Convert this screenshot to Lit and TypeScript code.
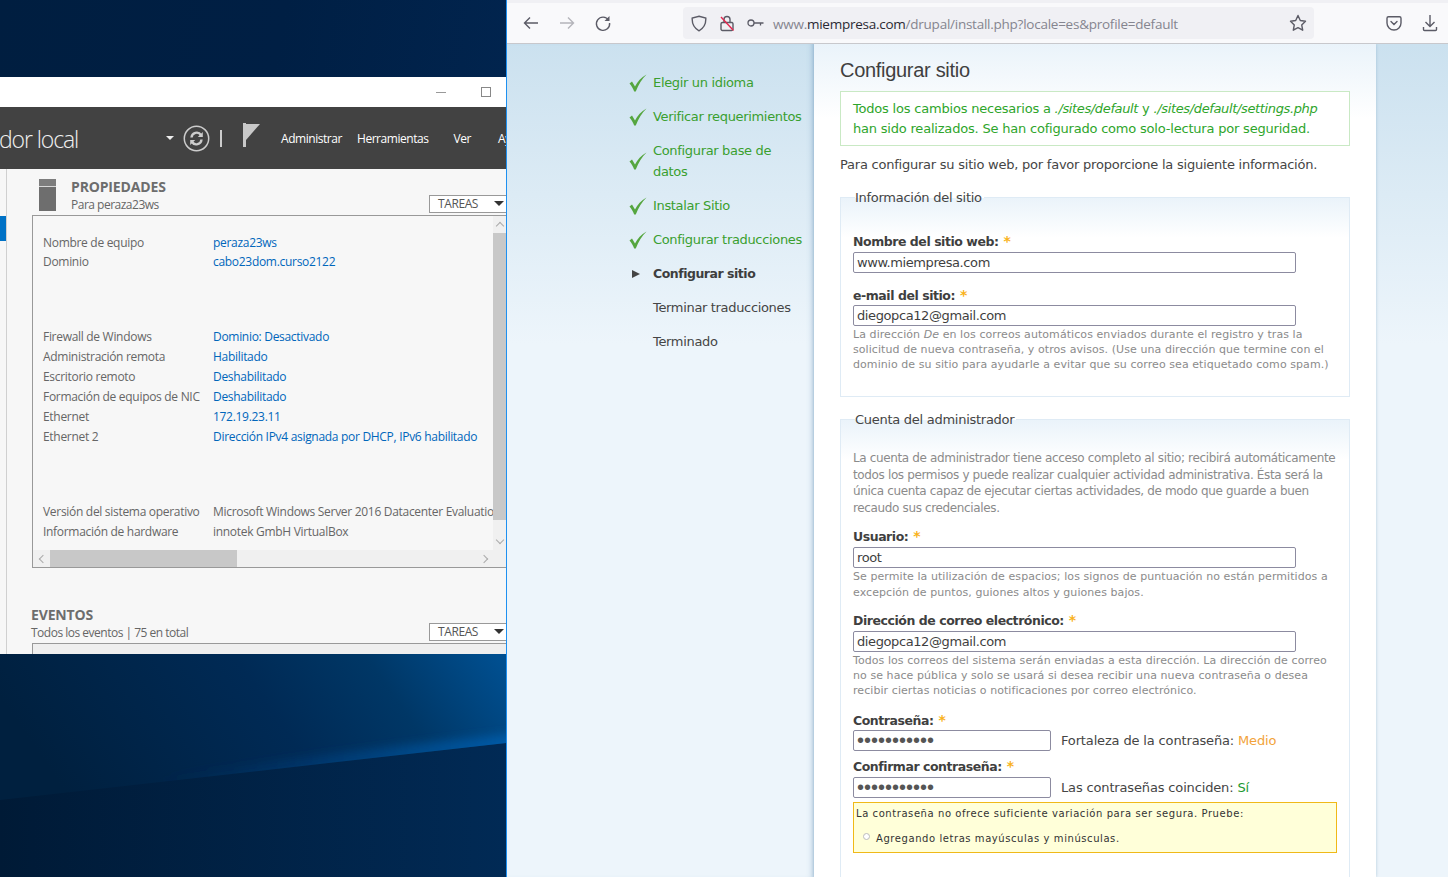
import { LitElement, html, css, svg } from 'lit';
import { customElement } from 'lit/decorators.js';

const backIcon = svg`<path d="M16 9H2.5M8 3.5 2.5 9 8 14.5" fill="none" stroke="currentColor" stroke-width="1.4"/>`;
const reloadIcon = svg`<path d="M14.6 6.2A6.6 6.6 0 1 0 15.6 9" fill="none" stroke="currentColor" stroke-width="1.4"/><path d="M15.5 2v5h-5z" fill="currentColor"/>`;

const steps = [
  { label: 'Elegir un idioma', state: 'done' },
  { label: 'Verificar requerimientos', state: 'done' },
  { label: 'Configurar base de datos', state: 'done' },
  { label: 'Instalar Sitio', state: 'done' },
  { label: 'Configurar traducciones', state: 'done' },
  { label: 'Configurar sitio', state: 'active' },
  { label: 'Terminar traducciones', state: 'todo' },
  { label: 'Terminado', state: 'todo' },
];

const propGroups = [
  [
    ['Nombre de equipo', 'peraza23ws', true],
    ['Dominio', 'cabo23dom.curso2122', true],
  ],
  [
    ['Firewall de Windows', 'Dominio: Desactivado', true],
    ['Administración remota', 'Habilitado', true],
    ['Escritorio remoto', 'Deshabilitado', true],
    ['Formación de equipos de NIC', 'Deshabilitado', true],
    ['Ethernet', '172.19.23.11', true],
    ['Ethernet 2', 'Dirección IPv4 asignada por DHCP, IPv6 habilitado', true],
  ],
  [
    ['Versión del sistema operativo', 'Microsoft Windows Server 2016 Datacenter Evaluation', false],
    ['Información de hardware', 'innotek GmbH VirtualBox', false],
  ],
];

@customElement('server-window')
class ServerWindow extends LitElement {
  static styles = css`
    :host {
      display: block;
      height: 577px;
      background: #f7f7f7;
      font-family: 'Open Sans', 'Liberation Sans', sans-serif;
      color: #666;
      overflow: hidden;
    }
    .titlebar {
      height: 30px;
      background: #fff;
      display: flex;
      justify-content: flex-end;
      align-items: center;
      gap: 35px;
      padding-right: 15px;
    }
    .min { width: 10px; height: 1px; background: #999; }
    .max { width: 8px; height: 8px; border: 1px solid #888; }
    .header {
      height: 62px;
      background: #424242;
      display: flex;
      align-items: center;
      color: #fff;
      white-space: nowrap;
      overflow: hidden;
    }
    .header > * { flex: none; }
    .app-title {
      font-size: 23px;
      font-weight: 300;
      margin-left: -1px;
      width: 167px;
      color: #f0f0f0;
      letter-spacing: -1.1px;
      padding-top: 2px;
    }
    .caret {
      width: 0;
      height: 0;
      border: 4px solid transparent;
      border-top-color: #eee;
      border-bottom: 0;
      margin-right: 9px;
    }
    .refresh { display: block; margin-right: 10px; }
    .sep { width: 2px; height: 17px; background: #ccc; margin-right: 21px; }
    .flag { display: block; margin-right: 20px; margin-top: -6px; }
    .menu { font-size: 12px; letter-spacing: -0.45px; color: #fff; margin-right: 15px; }
    .menu.ver { margin: 0 27px 0 10px; }
    .body { display: flex; height: 485px; }
    .rail {
      width: 6px;
      flex: none;
      border-right: 1px solid #d0d0d0;
      padding-top: 47px;
      box-sizing: content-box;
    }
    .rail i { display: block; height: 25px; background: #0072c6; }
    .main { flex: 1; min-width: 0; padding-left: 25px; }
    .section-head {
      display: flex;
      align-items: flex-end;
    }
    .server-icon {
      width: 17px;
      height: 32px;
      flex: none;
      margin: 0 15px 2px 7px;
      background: #6e6e6e;
    }
    .server-icon b { display: block; height: 7px; background: #7d7d7d; border-bottom: 1px solid #d8d8d8; }
    .head-text { flex: 1; }
    h3 { margin: 0; font-size: 14px; font-weight: 700; color: #6d6d6d; line-height: 18px; letter-spacing: -0.15px; }
    .sub { font-size: 12px; line-height: 17px; letter-spacing: -0.5px; }
    .tasks {
      width: 68px;
      height: 16px;
      border: 1px solid #999;
      border-right: 0;
      background: #fff;
      font-size: 12px;
      line-height: 16px;
      padding-left: 8px;
      position: relative;
      color: #555;
      letter-spacing: -0.4px;
    }
    .tasks::after {
      content: '';
      position: absolute;
      right: 2px;
      top: 5px;
      border: 5px solid transparent;
      border-top-color: #333;
      border-bottom: 0;
    }
    .props-head { padding-top: 11px; height: 33px; padding-bottom: 2px; }
    .box {
      height: 351px;
      border: 1px solid #999;
      border-right: 0;
      display: grid;
      grid-template-columns: 1fr 13px;
      grid-template-rows: 1fr 17px;
    }
    .rows { padding: 17px 0 0 10px; overflow: hidden; white-space: nowrap; font-size: 12px; letter-spacing: -0.3px; }
    .group { height: 94px; }
    .group:first-child .row { height: 19px; }
    .group:nth-child(2) { height: 175px; }
    .row { display: flex; height: 20px; line-height: 19px; }
    .row span:first-child { width: 170px; flex: none; }
    .row .link { color: #0066bb; }
    .vbar { background: #f0f0f0; position: relative; }
    .vbar i { display: block; width: 13px; height: 287px; background: #c8c8c8; margin-top: 17px; }
    .hbar { grid-column: 1 / 3; background: #f0f0f0; display: flex; position: relative; }
    .hbar i { display: block; width: 187px; margin-left: 17px; background: #c8c8c8; }
    .chev { width: 5px; height: 5px; border: solid #aaa; border-width: 1px 0 0 1px; position: absolute; }
    .chev.l { left: 7px; top: 6px; transform: rotate(-45deg); }
    .chev.r { right: 19px; top: 6px; transform: rotate(135deg); }
    .chev.u { top: 7px; left: 4px; transform: rotate(45deg); }
    .chev.d { bottom: 7px; left: 4px; transform: rotate(225deg); }
    .events { margin-top: 38px; margin-left: -1px; }
    .events-box { height: 40px; border: 1px solid #999; border-right: 0; border-bottom: 0; background: #efefef; margin-top: 2px; margin-left: 1px; }
  `;

  render() {
    return html`
      <div class="titlebar"><span class="min"></span><span class="max"></span></div>
      <div class="header">
        <span class="app-title">dor local</span>
        <span class="caret"></span>
        <svg class="refresh" width="27" height="27" viewBox="0 0 27 27" fill="none" stroke="#ccc">
          <circle cx="13.5" cy="13.5" r="12.2" stroke-width="1.5"/>
          <path d="M8.500 12.500a5.200 5.200 0 0 1 9.500-2.500M18.500 14.500a5.200 5.200 0 0 1-9.500 2.500" stroke-width="2.4"/>
          <path d="M19.800 7v5h-5zM7.200 20v-5h5z" fill="#ccc" stroke="none"/>
        </svg>
        <span class="sep"></span>
        <svg class="flag" width="18" height="24" viewBox="0 0 18 24">
          <rect x="0" y="0" width="3" height="24" fill="#c8c8c8"/>
          <path d="M3 1h14L3 17z" fill="#c8c8c8"/>
        </svg>
        <span class="menu">Administrar</span>
        <span class="menu">Herramientas</span>
        <span class="menu ver">Ver</span>
        <span class="menu">Ayuda</span>
      </div>
      <div class="body">
        <div class="rail"><i></i></div>
        <div class="main">
          <div class="section-head props-head">
            <span class="server-icon"><b></b></span>
            <div class="head-text">
              <h3>PROPIEDADES</h3>
              <div class="sub">Para peraza23ws</div>
            </div>
            <div class="tasks">TAREAS</div>
          </div>
          <div class="box">
            <div class="rows">
              ${propGroups.map(g => html`
                <div class="group">
                  ${g.map(r => html`<div class="row"><span>${r[0]}</span><span class=${r[2] ? 'link' : ''}>${r[1]}</span></div>`)}
                </div>
              `)}
            </div>
            <div class="vbar"><i></i><span class="chev u"></span><span class="chev d"></span></div>
            <div class="hbar"><i></i><span class="chev l"></span><span class="chev r"></span></div>
          </div>
          <div class="events">
            <div class="section-head">
              <div class="head-text">
                <h3>EVENTOS</h3>
                <div class="sub">Todos los eventos | 75 en total</div>
              </div>
              <div class="tasks">TAREAS</div>
            </div>
            <div class="events-box"></div>
          </div>
        </div>
      </div>
    `;
  }
}

@customElement('install-page')
class InstallPage extends LitElement {
  static styles = css`
    :host {
      display: flex;
      flex: 1;
      min-height: 0;
      background: linear-gradient(#cbe1ef 0, #edf5fb 300px);
      font-family: 'DejaVu Sans', Verdana, sans-serif;
      font-size: 13px;
      color: #454545;
      overflow: hidden;
    }
    .sidebar {
      width: 307px;
      flex: none;
      padding: 28px 0 0 122px;
      box-sizing: border-box;
      box-shadow: inset -6px 0 6px -5px rgba(90,140,180,0.45);
    }
    ol { list-style: none; margin: 0; padding: 0; }
    .sidebar li {
      display: flex;
      align-items: center;
      margin-bottom: 13px;
      line-height: 21px;
      letter-spacing: -0.33px;
    }
    .mark { width: 24px; flex: none; display: flex; align-items: center; }
    .text { flex: 1; padding-right: 7px; }
    li.done { color: #3a9f2f; }
    li.active { font-weight: 700; font-size: 12.5px; letter-spacing: -0.48px; color: #3e3e3e; }
    li.todo { color: #454545; }
    .tri { width: 0; height: 0; border: 4px solid transparent; border-left: 8px solid #444; border-right: 0; margin-left: 3px; }

    .content {
      width: 562px;
      flex: none;
      box-sizing: border-box;
      padding: 14px 26px 0;
      background: linear-gradient(#eaf3fa 0, #fff 75px);
      box-shadow: 0 0 3px rgba(120,160,190,0.5);
    }
    h1 {
      margin: 0;
      font-family: 'Liberation Sans', Arial, sans-serif;
      font-size: 20px;
      font-weight: 400;
      line-height: 25px;
      color: #3f3f3f;
      letter-spacing: -0.3px;
    }
    .status {
      margin-top: 8px;
      padding: 7px 12px;
      height: 55px;
      box-sizing: border-box;
      border: 1px solid #c9e9c4;
      background: #fff;
      color: #2ea52b;
      line-height: 20px;
      letter-spacing: -0.2px;
      white-space: nowrap;
    }
    .status i { letter-spacing: -0.36px; }
    .intro { margin: 9px 0 0; line-height: 19px; letter-spacing: -0.23px; }
    fieldset {
      margin: 0;
      padding: 0 12px;
      border: 1px solid #dfebf5;
      background: linear-gradient(#eaf3fa 0, #fff 40px);
      min-width: 0;
    }
    .site { margin-top: 13px; height: 210px; box-sizing: border-box; }
    .admin { margin-top: 12px; height: 600px; box-sizing: border-box; }
    legend { padding: 2px 2px 0 0; margin-left: 2px; line-height: 18px; letter-spacing: -0.27px; }
    label { display: block; font-size: 12.5px; font-weight: 700; line-height: 16px; color: #3f3f3f; letter-spacing: -0.45px; }
    label em { font-style: normal; font-size: 14px; color: #f9b21a; font-weight: 700; margin-left: 1px; }
    input {
      display: block;
      box-sizing: border-box;
      width: 443px;
      height: 21px;
      padding: 0 3px;
      margin: 2px 0 0;
      border: 1px solid #8c8ba0;
      border-radius: 2px;
      background: #fff;
      font: 13px 'DejaVu Sans', Verdana, sans-serif;
      letter-spacing: -0.4px;
      color: #3f3f3f;
      outline: none;
    }
    input.tight { margin-top: 1px; }
    input.short { width: 198px; margin: 0; flex: none; font: 20px 'Liberation Sans', Arial, sans-serif; letter-spacing: 0; color: #555; }
    .pw { display: flex; align-items: center; gap: 10px; letter-spacing: -0.15px; margin-top: 2px; }
    .pw.tight { margin-top: 1px; }
    .desc { font-size: 11px; line-height: 15.2px; color: #8b8b8b; margin-top: 1px; letter-spacing: 0.07px; }
    .lead { font-size: 12px; line-height: 16.6px; color: #8b8b8b; letter-spacing: -0.36px; margin: 21px -6px 0 0; }
    .f1 { margin-top: 26px; }
    .f2 { margin-top: 14px; }
    .f3 { margin-top: 12px; }
    .f4 { margin-top: 12px; }
    .f6 { margin-top: 14px; }
    .f7 { margin-top: 7px; }
    .medio { color: #f2a33a; }
    .si { color: #1c9a30; }
    .hint {
      width: 484px;
      height: 51px;
      box-sizing: border-box;
      margin-top: 4px;
      border: 1px solid #f0b918;
      background: #ffffd9;
      color: #333;
      font-size: 10px;
      padding: 3px 2px;
      line-height: 15px;
      letter-spacing: 0.57px;
    }
    .hint ul { margin: 10px 0 0; padding: 0; list-style: none; }
    .hint li { display: flex; align-items: center; margin: 0 0 0 7px; }
    .dot { width: 5px; height: 5px; border: 1px solid #bbb; border-radius: 50%; margin-right: 6px; margin-top: -4px; background: #fff; flex: none; }
  `;

  render() {
    return html`
      <div class="sidebar">
        <ol>
          ${steps.map(s => html`
            <li class=${s.state}>
              <span class="mark">
                ${s.state === 'done' ? html`
                  <svg width="18" height="18" viewBox="0 0 18 18"><path d="M0.500 9.500 3 7.500 6 12.500C8.500 7.500 12 3.500 17.500 0.500 13 5 9.500 10.500 6.800 17.500H5.200C4 14.500 2.500 11.500 0.500 9.500Z" fill="#55a63f"/></svg>
                ` : s.state === 'active' ? html`<span class="tri"></span>` : ''}
              </span>
              <span class="text">${s.label}</span>
            </li>
          `)}
        </ol>
      </div>
      <div class="content">
        <h1>Configurar sitio</h1>
        <div class="status">
          Todos los cambios necesarios a <i>./sites/default</i> y <i>./sites/default/settings.php</i><br>
          han sido realizados. Se han cofigurado como solo-lectura por seguridad.
        </div>
        <p class="intro">Para configurar su sitio web, por favor proporcione la siguiente información.</p>

        <fieldset class="site">
          <legend>Información del sitio</legend>
          <div class="f1">
            <label>Nombre del sitio web: <em>*</em></label>
            <input type="text" value="www.miempresa.com" />
          </div>
          <div class="f2">
            <label>e-mail del sitio: <em>*</em></label>
            <input class="tight" type="text" value="diegopca12@gmail.com" />
            <div class="desc">La dirección <i>De</i> en los correos automáticos enviados durante el registro y tras la solicitud de nueva contraseña, y otros avisos. (Use una dirección que termine con el dominio de su sitio para ayudarle a evitar que su correo sea etiquetado como spam.)</div>
          </div>
        </fieldset>

        <fieldset class="admin">
          <legend>Cuenta del administrador</legend>
          <div class="lead">La cuenta de administrador tiene acceso completo al sitio; recibirá automáticamente todos los permisos y puede realizar cualquier actividad administrativa. Ésta será la única cuenta capaz de ejecutar ciertas actividades, de modo que guarde a buen recaudo sus credenciales.</div>
          <div class="f3">
            <label>Usuario: <em>*</em></label>
            <input type="text" value="root" />
            <div class="desc">Se permite la utilización de espacios; los signos de puntuación no están permitidos a excepción de puntos, guiones altos y guiones bajos.</div>
          </div>
          <div class="f4">
            <label>Dirección de correo electrónico: <em>*</em></label>
            <input type="text" value="diegopca12@gmail.com" />
            <div class="desc">Todos los correos del sistema serán enviadas a esta dirección. La dirección de correo no se hace pública y solo se usará si desea recibir una nueva contraseña o desea recibir ciertas noticias o notificaciones por correo electrónico.</div>
          </div>
          <div class="f6">
            <label>Contraseña: <em>*</em></label>
            <div class="pw tight">
              <input class="short" type="password" value="abcdefghijk" />
              <span>Fortaleza de la contraseña: <span class="medio">Medio</span></span>
            </div>
          </div>
          <div class="f7">
            <label>Confirmar contraseña: <em>*</em></label>
            <div class="pw">
              <input class="short" type="password" value="abcdefghijk" />
              <span>Las contraseñas coinciden: <span class="si">Sí</span></span>
            </div>
          </div>
          <div class="hint">
            La contraseña no ofrece suficiente variación para ser segura. Pruebe:
            <ul><li><span class="dot"></span>Agregando letras mayúsculas y minúsculas.</li></ul>
          </div>
        </fieldset>
      </div>
    `;
  }
}

@customElement('app-root')
export class AppRoot extends LitElement {
  static styles = css`
    :host {
      display: flex;
      width: 1448px;
      height: 877px;
      overflow: hidden;
    }
    .desktop {
      width: 506px;
      flex: none;
      display: flex;
      flex-direction: column;
      background: #001f42;
    }
    .sky {
      height: 77px;
      flex: none;
      background: linear-gradient(100deg, #001e40 0, #001f44 55%, #01244e 100%);
    }
    .wallpaper { display: block; width: 506px; height: 223px; }
    .browser {
      flex: 1;
      min-width: 0;
      display: flex;
      flex-direction: column;
      border-left: 1px solid #1e90f0;
    }
    .strip { height: 3px; background: #f0f0f4; flex: none; }
    .toolbar {
      height: 41px;
      flex: none;
      box-sizing: border-box;
      background: #f9f9fb;
      border-bottom: 1px solid #c8c8cc;
      display: flex;
      align-items: center;
      color: #5b5b66;
      font-family: 'Open Sans', 'Liberation Sans', sans-serif;
    }
    .nav { display: block; flex: none; }
    .back { margin-left: 15px; }
    .fwd { margin-left: 18px; color: #b4b4ba; }
    .reload { margin-left: 18px; margin-right: 71px; }
    .urlbar {
      width: 631px;
      height: 32px;
      flex: none;
      background: #f0f0f4;
      border-radius: 4px;
      display: flex;
      align-items: center;
      box-sizing: border-box;
      padding: 0 7px 0 8px;
      font-size: 13.5px;
      letter-spacing: -0.25px;
      color: #85858f;
      white-space: nowrap;
    }
    .urlbar b { font-weight: 400; color: #2b2a33; }
    .urlbar svg { display: block; flex: none; }
    .urlbar .gap { margin-left: 12px; }
    .url { flex: 1; margin-left: 9px; padding-top: 1px; }
    .tb-right { margin-left: 72px; }
    .tb-dl { margin-left: 20px; }
  `;

  render() {
    return html`
      <div class="desktop">
        <div class="sky"></div>
        <server-window></server-window>
        <svg class="wallpaper" viewBox="0 0 506 223" preserveAspectRatio="none">
          <defs>
            <linearGradient id="low" x1="0" x2="1" y1="0" y2="0">
              <stop offset="0" stop-color="#001a36"/><stop offset="1" stop-color="#012a55"/>
            </linearGradient>
            <linearGradient id="up" x1="0" x2="1" y1="0.300" y2="0.100">
              <stop offset="0" stop-color="#00203f"/><stop offset="0.500" stop-color="#002a55"/><stop offset="0.750" stop-color="#003766"/><stop offset="1" stop-color="#004f90"/>
            </linearGradient>
            <linearGradient id="beam" x1="0" x2="1" y1="0" y2="0">
              <stop offset="0.300" stop-color="#003a78" stop-opacity="0"/><stop offset="1" stop-color="#0060b0" stop-opacity="0.900"/>
            </linearGradient>
            <clipPath id="above"><path d="M0 146 506 89V0H0Z"/></clipPath>
            <filter id="soft" x="-5%" y="-50%" width="110%" height="200%"><feGaussianBlur stdDeviation="5"/></filter>
          </defs>
          <rect width="506" height="223" fill="url(#low)"/>
          <path d="M0 146 506 89V0H0Z" fill="url(#up)"/>
          <g clip-path="url(#above)">
            <path d="M0 166 530 106V78C340 96 170 122 0 146Z" fill="url(#beam)" filter="url(#soft)"/>
          </g>
        </svg>
      </div>
      <div class="browser">
        <div class="strip"></div>
        <div class="toolbar">
          <svg class="nav back" width="18" height="18" viewBox="0 0 18 18">${backIcon}</svg>
          <svg class="nav fwd" width="18" height="18" viewBox="0 0 18 18"><g transform="matrix(-1 0 0 1 18 0)">${backIcon}</g></svg>
          <svg class="nav reload" width="18" height="18" viewBox="0 0 18 18">${reloadIcon}</svg>
          <div class="urlbar">
            <svg width="16" height="17" viewBox="0 0 16 17" fill="none" stroke="#5b5b66" stroke-width="1.400"><path d="M8 1.200 14.800 3c.3 5.500-1.500 10-6.800 12.800C2.700 13 .9 8.500 1.200 3Z"/></svg>
            <svg class="gap" width="16" height="17" viewBox="0 0 16 17" fill="none" stroke="#5b5b66" stroke-width="1.400"><path d="M5 7V4.500a3 3 0 0 1 6 0V7"/><path d="M3.500 7.500h9.500a1.500 1.500 0 0 1 1 1.300v5.200a1.500 1.500 0 0 1-1.500 1.500h-9a1.500 1.500 0 0 1-1.500-1.500V9a1.500 1.500 0 0 1 1.500-1.500Z"/><path d="M2 2 14.500 15.500" stroke="#e22850"/></svg>
            <svg class="gap" width="17" height="12" viewBox="0 0 17 12" fill="none" stroke="#5b5b66" stroke-width="1.300"><circle cx="4" cy="6" r="3"/><path d="M7 6h9.500M13.500 6v2.500"/></svg>
            <span class="url">www.<b>miempresa.com</b>/drupal/install.php?locale=es&amp;profile=default</span>
            <svg width="18" height="18" viewBox="0 0 18 18" fill="none" stroke="#5b5b66" stroke-width="1.400"><path d="M9 1.500 11.300 6.500 16.500 7.200 12.700 10.900 13.700 16.200 9 13.600 4.300 16.200 5.300 10.900 1.500 7.200 6.700 6.500Z" stroke-linejoin="round"/></svg>
          </div>
          <svg class="nav tb-right" width="16" height="16" viewBox="0 0 16 16" fill="none" stroke="#5b5b66" stroke-width="1.400"><path d="M2.500 1.700h11A1.500 1.500 0 0 1 15 3.200V8A7 7 0 0 1 1 8V3.200a1.500 1.500 0 0 1 1.500-1.500Z"/><path d="M5 6.500 8 9.500 11 6.500" stroke-linecap="round"/></svg>
          <svg class="nav tb-dl" width="16" height="18" viewBox="0 0 16 18" fill="none" stroke="#5b5b66" stroke-width="1.400"><path d="M8 1v11M3.500 8 8 12.500 12.500 8M1.500 13v2.500a1 1 0 0 0 1 1h11a1 1 0 0 0 1-1V13"/></svg>
        </div>
        <install-page></install-page>
      </div>
    `;
  }
}
